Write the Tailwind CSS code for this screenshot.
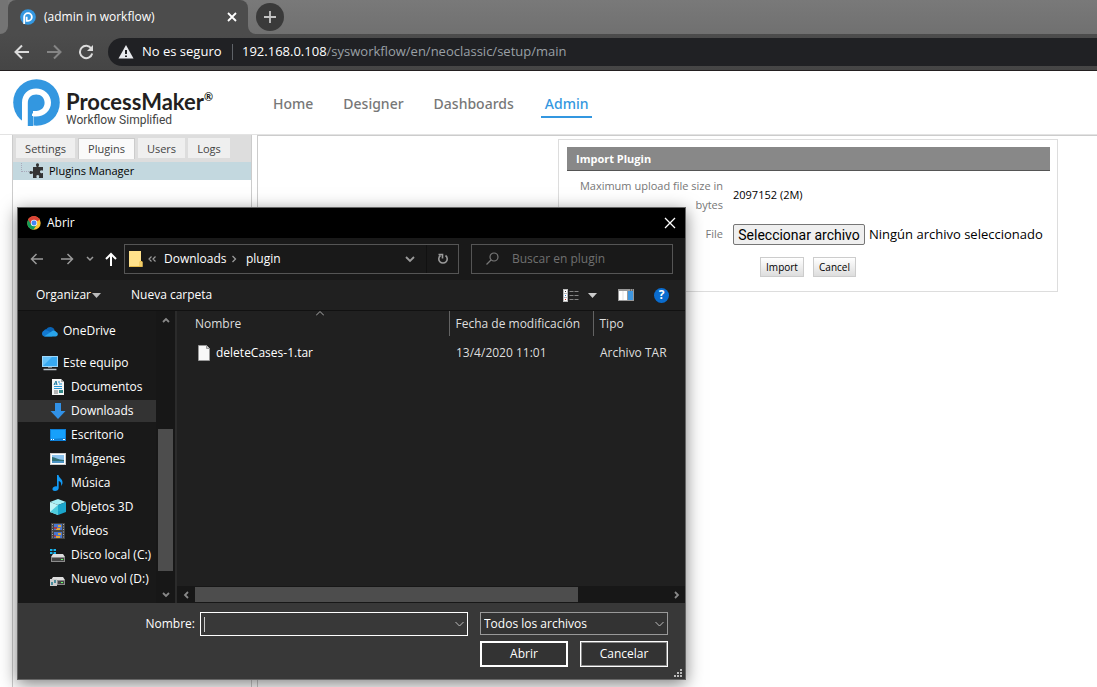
<!DOCTYPE html>
<html lang="es">
<head>
<meta charset="utf-8">
<title>(admin in workflow)</title>
<script src="https://cdn.jsdelivr.net/npm/@tailwindcss/browser@4"></script>
</head>
<body class="relative flex h-screen flex-col overflow-hidden bg-white font-['Open_Sans',sans-serif] text-xs text-black">

<!-- Browser frame -->
<div class="flex flex-col border-b border-[#231f20] bg-[#4c4c4c] text-[13px] text-white">
  <div class="flex h-[34px] bg-linear-to-b from-[#797979] to-[#707070]">
    <div class="w-2 bg-[#4c4c4c]"><div class="h-full rounded-br-lg bg-[#747474]"></div></div>
    <div class="flex w-60 items-center rounded-t-lg bg-[#4c4c4c] pl-3 pr-2">
      <svg class="size-4" viewBox="0 0 48 48"><circle cx="24" cy="24" r="23.500" fill="#3397e0"/><path d="M12.500 45V24a11.500 11.500 0 1 1 11.500 11.500h-4v-12" fill="none" stroke="#fff" stroke-width="5.500"/></svg>
      <span class="ml-2 flex-1 text-xs">(admin in workflow)</span>
      <button aria-label="Cerrar pestaña"><svg class="size-4" viewBox="0 0 16 16" fill="none" stroke="#fff" stroke-width="1.800"><path d="M4 4l8 8M12 4l-8 8"/></svg></button>
    </div>
    <div class="flex flex-1 bg-[#4c4c4c]"><div class="flex-1 rounded-bl-lg bg-linear-to-b from-[#797979] to-[#707070] px-2 pt-[3px]">
      <button class="flex size-7 items-center justify-center rounded-full bg-[#3a3a3a]" aria-label="Nueva pestaña"><svg class="size-4" viewBox="0 0 16 16" stroke="#c4c4c4" stroke-width="1.800"><path d="M8 2v12M2 8h12"/></svg></button>
    </div></div>
  </div>
  <div class="flex h-9 items-center bg-linear-to-b from-[#4c4c4c] to-[#454545]">
    <button class="ml-[14px]" aria-label="Atrás"><svg class="size-4" viewBox="0 0 16 16" fill="none" stroke="#dcdcdc" stroke-width="2"><path d="M15 8H2M8 1.500L1.500 8 8 14.500"/></svg></button>
    <button class="ml-4" aria-label="Adelante"><svg class="size-4" viewBox="0 0 16 16" fill="none" stroke="#858585" stroke-width="2"><path d="M1 8h13M8 1.500L14.500 8 8 14.500"/></svg></button>
    <button class="ml-4" aria-label="Recargar"><svg class="size-4" viewBox="0 0 16 16" fill="none" stroke="#dcdcdc" stroke-width="2"><path d="M13.300 4.500A6.200 6.200 0 1 0 14.200 9.500"/><path d="M15 1v6H9z" fill="#dcdcdc" stroke="none"/></svg></button>
    <div class="ml-[14px] flex h-7 flex-1 items-center rounded-l-full bg-[#202124] pl-[10px]">
      <svg class="size-4" viewBox="0 0 16 16"><path d="M8 1l7.500 13.500H.5z" fill="#e8eaed"/><path d="M8 6v4M8 11.500v1.500" stroke="#202124" stroke-width="2"/></svg>
      <span class="ml-2 w-[82px] whitespace-nowrap">No es seguro</span>
      <span class="ml-2 h-4 w-px bg-[#5f6368]"></span>
      <span class="ml-[9px] whitespace-nowrap text-[#9aa0a6]"><span class="text-white">192.168.0.108</span>/sysworkflow/en/neoclassic/setup/main</span>
    </div>
  </div>
</div>

<!-- ProcessMaker header -->
<header class="flex h-16 shrink-0 border-b border-[#e3e3e3]">
  <div class="flex w-[273px] pl-[13px] pt-2">
    <svg class="size-[47px]" viewBox="0 0 47 47"><circle cx="23.500" cy="23.500" r="23.300" fill="#3397e0"/><path d="M9 39V24C9 15 15 9.500 23 9.500S38 15.500 38 23.500 31.500 37.500 23 37.500H20.500V46.500H15V47L9 45z" fill="#fff"/><path d="M15 47V24c0-5.500 3.500-9 8.500-9s8.500 3.500 8.500 8.500-3.500 8.500-8 8.500h-4v-8" fill="none"/><path d="M14.800 47V24c0-5.200 3.500-8.600 8.400-8.600s8.400 3.500 8.400 8.300-3.600 8.200-8.300 8.200h-3.200V47z" fill="#3397e0"/><path d="M20 24v10.500h-1V37h6v-5h-5z" fill="#fff"/></svg>
    <div class="ml-[6px] whitespace-nowrap pt-[10px] text-[#231f20]">
      <div class="flex font-['Lato',sans-serif] text-[22px] leading-[26px] font-bold">ProcessMaker<span class="text-[11px] leading-4">®</span></div>
      <div class="font-['Roboto',sans-serif] text-xs leading-[10px] text-[#444]">Workflow Simplified</div>
    </div>
  </div>
  <nav class="flex gap-[30px] pt-[22px] font-['Noto_Sans',sans-serif] text-sm leading-[22px] font-medium text-[#777]">
    <a href="#">Home</a><a href="#">Designer</a><a href="#">Dashboards</a>
    <a href="#" class="-ml-[3px] h-[25px] border-b-2 border-[#3397e0] px-1 text-[#3397e0]">Admin</a>
  </nav>
</header>

<main class="flex flex-1 text-[11px]">
  <aside class="ml-3 w-60 border-x border-[#ccc]">
    <div class="flex h-[27px] items-start gap-[3px] border-b-4 border-[#ddd] bg-[#ddd] pl-[3px] pt-[3px] text-[#444]">
      <a href="#" class="h-5 w-[59px] bg-[#efefef] pt-[3px] text-center leading-4">Settings</a>
      <a href="#" class="h-[21px] w-[57px] border border-b-0 border-[#ccc] bg-[#fafafa] pt-[2px] text-center leading-4">Plugins</a>
      <a href="#" class="h-5 w-[47px] bg-[#efefef] pt-[3px] text-center leading-4">Users</a>
      <a href="#" class="h-5 w-[42px] bg-[#efefef] pt-[3px] text-center leading-4">Logs</a>
    </div>
    <a href="#" class="flex h-[18px] items-center bg-[#c3d8df] pl-2">
      <span class="mb-2 h-[9px] w-2 border-b border-l border-dotted border-[#aab]"></span>
      <svg class="size-4" viewBox="0 0 16 16" fill="#333"><path d="M4 4h3.500c.4-.8-.8-1.500-.5-2.600a1.600 1.600 0 0 1 3 0c.3 1.100-.9 1.800-.5 2.600H14v3.500c-.9.300-1.600-.7-2.300 0a1.500 1.500 0 0 0 0 2.600c.7.500 1.400-.4 2.300 0V15h-4c-.5-.9.700-1.400 0-2.400a1.500 1.500 0 0 0-2.500 0c-.6 1 .6 1.500 0 2.400H4v-4.500c-.9-.4-1.500.7-2.500.5a1.600 1.600 0 0 1 0-3c1-.3 1.600.8 2.500.4z"/></svg>
      <span class="ml-1">Plugins Manager</span>
    </a>
  </aside>
  <section class="ml-[5px] flex-1 overflow-hidden border-l border-t border-[#ccc]">
    <form class="ml-[300px] mt-[3px] w-[500px] border border-[#ddd] pl-2 pr-[7px] pt-[7px] pb-[14px]">
      <h1 class="h-6 border-b border-[#555] bg-[#888] pl-[9px] text-[11px] leading-6 font-bold text-white">Import Plugin</h1>
      <div class="flex items-center pt-[5px]">
        <span class="w-[156px] text-right leading-[19px] text-[#777]">Maximum upload file size in bytes</span>
        <span class="ml-[10px]">2097152 (2M)</span>
      </div>
      <div class="mt-[9px] flex h-[23px] items-center whitespace-nowrap">
        <label for="file" class="w-[156px] text-right text-[#777]">File</label>
        <input id="file" type="file" class="sr-only">
        <label for="file" class="ml-[10px] flex h-[21px] w-[132px] items-center justify-center rounded-xs border border-[#767676] bg-[#efefef] font-['Roboto',sans-serif] text-sm">Seleccionar archivo</label>
        <span class="ml-1 text-[13px]">Ningún archivo seleccionado</span>
      </div>
      <div class="mt-[11px] ml-[193px] flex gap-[9px]">
        <button type="button" class="h-5 w-11 border border-[#ccc] bg-linear-to-b from-white to-[#ddd] pt-px text-[10px]">Import</button>
        <button type="button" class="h-5 w-[43px] border border-[#ccc] bg-linear-to-b from-white to-[#ddd] pt-px text-[10px]">Cancel</button>
      </div>
    </form>
  </section>
</main>

<!-- File picker window -->
<div role="dialog" aria-label="Abrir" class="absolute left-[17px] top-[207px] w-[669px] border border-[#666] bg-[#202020] text-xs text-white shadow-[0_4px_16px_rgba(0,0,0,0.5)]">
  <div class="flex h-[30px] items-center bg-black pl-[9px] pr-2">
    <svg class="size-[14px]" viewBox="0 0 48 48"><circle cx="24" cy="24" r="23" fill="#fbc02d"/><path d="M24 24L4 12.500A23 23 0 0 1 44 13z" fill="#db4437"/><path d="M24 24L4 12.500A23 23 0 0 0 22 47L34 29z" fill="#0f9d58"/><path d="M24 13h20A23 23 0 0 0 4 12.500L14.500 29z" fill="#db4437"/><circle cx="24" cy="24" r="11" fill="#f1f1f1"/><circle cx="24" cy="24" r="8.500" fill="#4285f4"/></svg>
    <span class="ml-[6px] flex-1">Abrir</span>
    <button aria-label="Cerrar"><svg class="size-[14px]" viewBox="0 0 14 14" stroke="#fff" stroke-width="1.300"><path d="M2 2l10 10M12 2L2 12"/></svg></button>
  </div>
  <div class="flex h-[42px] items-center bg-[#191919] px-3 pb-px">
    <button aria-label="Atrás"><svg class="size-[14px]" viewBox="0 0 14 14" fill="none" stroke="#9a9a9a" stroke-width="1.500"><path d="M13 7H1.500M6.500 2l-5 5 5 5"/></svg></button>
    <button class="ml-4" aria-label="Adelante"><svg class="size-[14px]" viewBox="0 0 14 14" fill="none" stroke="#9a9a9a" stroke-width="1.500"><path d="M1 7h11.500M7.500 2l5 5-5 5"/></svg></button>
    <button class="ml-3" aria-label="Recientes"><svg class="size-2" viewBox="0 0 8 8" fill="none" stroke="#9a9a9a" stroke-width="1.500"><path d="M1 2l3 3 3-3"/></svg></button>
    <button class="ml-[10px]" aria-label="Subir"><svg class="size-[14px]" viewBox="0 0 14 14" fill="none" stroke="#fff" stroke-width="2"><path d="M7 14V2M2 7l5-5 5 5"/></svg></button>
    <div class="ml-[6px] flex h-[30px] flex-1 items-center border border-[#555] pl-1">
      <svg class="h-4 w-[14px]" viewBox="0 0 14 16"><path d="M0 0h12v10l1.500 1v5H0z" fill="#ffe18b"/><path d="M.5 15.500h12.500v-5h-2v5" fill="none" stroke="#e6bb4a"/></svg>
      <svg class="ml-1 size-[10px]" viewBox="0 0 10 10" fill="none" stroke="#9a9a9a" stroke-width="1.200"><path d="M4.500 2.500L2 5l2.500 2.500M8.500 2.500L6 5l2.500 2.500"/></svg>
      <span class="ml-[7px] w-[62px]">Downloads</span>
      <svg class="ml-1 size-2" viewBox="0 0 8 8" fill="none" stroke="#9a9a9a" stroke-width="1.300"><path d="M2.500 1l3 3-3 3"/></svg>
      <span class="ml-2 flex-1">plugin</span>
      <button aria-label="Ubicaciones anteriores"><svg class="size-[10px]" viewBox="0 0 10 10" fill="none" stroke="#9a9a9a" stroke-width="1.800"><path d="M1 3l4 4 4-4"/></svg></button>
      <button class="ml-[11px] flex h-7 w-8 items-center justify-center border-l border-[#111]" aria-label="Actualizar"><svg class="size-3" viewBox="0 0 12 12" fill="none" stroke="#9a9a9a" stroke-width="1.600"><path d="M8.500 2.500a4.200 4.200 0 1 1-5 0M1.500 1.500h4v4"/></svg></button>
    </div>
    <div class="ml-3 flex h-[30px] w-[202px] items-center border border-[#555] pl-[14px]">
      <svg class="size-[13px]" viewBox="0 0 13 13" fill="none" stroke="#777" stroke-width="1.200"><circle cx="8" cy="5" r="4"/><path d="M5 8L.5 12.500"/></svg>
      <input aria-label="Buscar en plugin" placeholder="Buscar en plugin" class="ml-[13px] w-36 bg-transparent placeholder:text-[#707070]">
    </div>
  </div>
  <div class="flex h-[31px] items-center border-b border-[#111] pl-[18px] pr-4">
    <button class="flex w-[65px] items-center justify-between">Organizar <svg class="h-[5px] w-[9px] shrink-0" viewBox="0 0 9 5" fill="#bbb"><path d="M0 0h9L4.500 5z"/></svg></button>
    <button class="ml-[30px]">Nueva carpeta</button>
    <button class="ml-auto" aria-label="Cambiar vista"><svg class="h-[13px] w-4" viewBox="0 0 16 13"><path d="M0 0h5v13H0z" fill="#bbb"/><path d="M1 1h3v3H1zM1 5h3v3H1zM1 9h3v3H1z" fill="#fff"/><path d="M2 2h1v1H2z" fill="#333"/><path d="M2 6h1v1H2z" fill="#27c"/><path d="M2 10h1v1H2z" fill="#c22"/><path d="M6.500 2.500h4m1 0h4M6.500 6.500h4m1 0h4M6.500 10.500h4m1 0h4" stroke="#858585"/></svg></button>
    <button class="ml-[9px]" aria-label="Más opciones"><svg class="h-[5px] w-[9px]" viewBox="0 0 9 5" fill="#ccc"><path d="M0 0h9L4.500 5z"/></svg></button>
    <button class="ml-[21px]" aria-label="Panel de vista previa"><svg class="h-3 w-4" viewBox="0 0 16 12"><path d="M0 0h16v12H0z" fill="#999"/><path d="M1 2h8v9H1z" fill="#fff"/><path d="M5 2v9" stroke="#ccc" stroke-width=".6"/><path d="M10 2h5v9h-5z" fill="#3f97e0"/><path d="M12 1h1m1 0h1" stroke="#333"/></svg></button>
    <button class="ml-5 flex size-[15px] items-center justify-center rounded-full bg-[#0a6cce] text-xs font-bold" aria-label="Ayuda">?</button>
  </div>

  <div class="flex h-[292px]">
    <ul class="w-[138px] bg-[#191919] pt-2 leading-[22px]">
      <li class="flex h-6 items-center pl-6"><svg class="h-[11px] w-4" viewBox="0 0 16 11"><path d="M1.500 7C1.500 4.500 3 3 4.500 3 6 .5 11 0 12.500 4l-2 3z" fill="#0a64b5"/><path d="M0 7.500C0 5 2.500 3.500 5 4.500l7 3-2 3H3C1.200 10.500 0 9.300 0 7.500z" fill="#1379d0"/><path d="M2 10.500l7.500-5c1.500-1.500 4-1 4.500.5 2.500.500 2.500 4.500-.5 4.500z" fill="#29a4ea"/></svg><span class="ml-[5px]">OneDrive</span></li>
      <li class="mt-2 flex h-6 items-center pl-6"><svg class="h-[15px] w-4" viewBox="0 0 16 15"><path d="M0 0h16v11H0z" fill="#9ed7fa"/><path d="M1 1h14v9H1z" fill="#37a9f2"/><path d="M1 10V1h9z" fill="#66c2f9"/><path d="M6 11h4v1H6z" fill="#777"/><path d="M1.500 13.500h13" stroke="#bdc5cc" stroke-width="1.500"/></svg><span class="ml-[5px]">Este equipo</span></li>
      <li class="flex h-6 items-center pl-8"><svg class="size-4" viewBox="0 0 16 16"><path d="M2 0h9l3 3v13H2z" fill="#f5f5f5"/><path d="M11 0v3h3" fill="#aaa"/><path d="M4 5h3m2 0h3M4 7.500h8M4 9.500h8M8 3h2" stroke="#2595d5"/><path d="M4 12h4M4 14h4" stroke="#777"/><path d="M9 11h4v3H9z" fill="#388"/><path d="M4 6l2-4 1 4" fill="none" stroke="#279"/></svg><span class="ml-[5px]">Documentos</span></li>
      <li class="my-px flex h-[22px] items-center bg-[#333] pl-8"><svg class="size-4" viewBox="0 0 16 16"><path d="M5 0h6v8h4.500L8 16 .5 8H5z" fill="#3191e6"/></svg><span class="ml-[5px]">Downloads</span></li>
      <li class="flex h-6 items-center pl-8"><svg class="h-3 w-4" viewBox="0 0 16 12"><path d="M0 0h16v12H0z" fill="#0e7fd6"/><path d="M1 1h14v8L1 10z" fill="#16a0fb"/><path d="M1 10.500h1m1 0h1m9 0h2" stroke="#fff"/></svg><span class="ml-[5px]">Escritorio</span></li>
      <li class="flex h-6 items-center pl-8"><svg class="h-3 w-4" viewBox="0 0 16 12"><path d="M0 0h16v12H0z" fill="#ccc"/><path d="M1 1h14v10H1z" fill="#fff"/><path d="M2 2h12v8H2z" fill="#8dc4ee"/><path d="M2 4c3 0 6 3 12 3v1H2z" fill="#2f6f74"/><path d="M2 8h12v2H2z" fill="#4b93c4"/></svg><span class="ml-[5px]">Imágenes</span></li>
      <li class="flex h-6 items-center pl-8"><svg class="size-4" viewBox="0 0 16 16"><path d="M7 0h1.500c.3 3 4.500 4 4 8-.2 1.300-.7 2-1.500 3 .6-3-.5-4.500-2.300-5v7c0 1.700-1.700 3-3.700 3-1.700 0-2.700-1-2.500-2.300C2.700 12 5 11 7 11.500z" fill="#129af5"/></svg><span class="ml-[5px]">Música</span></li>
      <li class="flex h-6 items-center pl-8"><svg class="size-4" viewBox="0 0 16 16"><path d="M0 3l8-3 8 3-8 3z" fill="#a5eef5"/><path d="M0 3l8 3v10l-8-3z" fill="#bff3f6"/><path d="M16 3L8 6v10l8-3z" fill="#1ba5cb"/><path d="M0 13l8-7v10z" fill="#4dcbdc"/></svg><span class="ml-[5px]">Objetos 3D</span></li>
      <li class="flex h-6 items-center pl-8"><svg class="size-4" viewBox="0 0 16 16"><path d="M1 0h14v16H1z" fill="#444"/><path d="M4 1h8v6H4zM4 9h8v6H4z" fill="#4a77cf"/><path d="M8 2h3v2H8zM6 5h4v2H6zM8 10h3v2H8zM6 13h4v2H6z" fill="#e0a336"/><path d="M4 4h3v2H4zM4 12h2v2H4z" fill="#a33a55"/><path d="M2.500 1v15M13.500 1v15" stroke="#aaa" stroke-dasharray="1 1.500"/></svg><span class="ml-[5px]">Vídeos</span></li>
      <li class="flex h-6 items-center pl-8"><svg class="size-4" viewBox="0 0 16 16"><path d="M0 2h2.500v2H0zM3.500 2H6v2H3.500zM0 5h2.500v2H0zM3.500 5H6v2H3.500z" fill="#18b3ed"/><path d="M3 7h10l2 3H1z" fill="#ddd"/><path d="M1 10h14v5H1z" fill="#8b8b8b"/><path d="M2 11h12v3H2z" fill="#444"/><path d="M11 12h2v1h-2z" fill="#6f6"/></svg><span class="ml-[5px] whitespace-nowrap">Disco local (C:)</span></li>
      <li class="flex h-6 items-center pl-8"><svg class="size-4" viewBox="0 0 16 16"><path d="M3 6h10l2 3H1z" fill="#ddd"/><path d="M1 9h14v5H1z" fill="#8b8b8b"/><path d="M8 10h6v3H8z" fill="#444"/><path d="M11 11h2v1h-2z" fill="#6f6"/><path d="M0 8h7v7H0z" fill="#ccc"/><path d="M1 11h2v3H1zM4 9h2v3H4z" fill="#4a8b9a"/></svg><span class="ml-[5px] whitespace-nowrap">Nuevo vol (D:)</span></li>
    </ul>
    <div class="flex w-[21px] flex-col items-center border-r-2 border-[#2b2b2b] bg-[#171717] px-[2px]">
      <svg class="mt-[6px] h-[7px] w-2" viewBox="0 0 8 7" fill="none" stroke="#888" stroke-width="1.800"><path d="M1 5l3-3 3 3"/></svg>
      <div class="mt-[105px] h-[142px] w-[15px] bg-[#4d4d4d]"></div>
      <svg class="mt-5 h-[7px] w-2" viewBox="0 0 8 7" fill="none" stroke="#888" stroke-width="1.800"><path d="M1 2l3 3 3-3"/></svg>
    </div>
    <div class="relative flex flex-1 flex-col">
      <svg class="absolute left-[139px] top-0 h-[5px] w-2" viewBox="0 0 8 5" fill="none" stroke="#aaa"><path d="M0 4.500l4-4 4 4"/></svg>
      <table class="w-full table-fixed text-left">
        <thead><tr class="h-[25px] text-[#dedede]"><th class="w-[272px] pl-[18px] font-normal">Nombre</th><th class="w-36 border-l border-[#636363] pl-[6px] font-normal">Fecha de modificación</th><th class="border-l border-[#636363] pl-[6px] font-normal">Tipo</th></tr></thead>
        <tbody><tr class="h-[34px]"><td class="pl-[21px]"><span class="flex items-center"><svg class="h-4 w-3" viewBox="0 0 12 16"><path d="M.5.5h8l3 3v12H.5z" fill="#f8f8f8" stroke="#999"/><path d="M8.500.5v3h3" fill="#ccc" stroke="#999"/></svg><span class="ml-[6px]">deleteCases-1.tar</span></span></td><td class="pl-[7px] text-[#dedede]">13/4/2020 11:01</td><td class="whitespace-nowrap pl-[7px] text-[#dedede]">Archivo TAR</td></tr></tbody>
      </table>
      <div class="mt-auto flex h-[17px] items-center bg-[#171717] pl-[6px] pr-[5px]">
        <svg class="h-2 w-[7px]" viewBox="0 0 7 8" fill="none" stroke="#888" stroke-width="1.800"><path d="M5 1L2 4l3 3"/></svg>
        <div class="ml-[5px] h-[15px] w-[383px] bg-[#4d4d4d]"></div>
        <svg class="ml-auto h-2 w-[7px]" viewBox="0 0 7 8" fill="none" stroke="#888" stroke-width="1.800"><path d="M2 1l3 3-3 3"/></svg>
      </div>
    </div>
  </div>

  <div class="relative flex h-[76px] flex-col bg-[#383838] pr-[17px] pt-[9px]">
    <div class="flex items-start">
      <label for="name" class="w-[182px] pr-[5px] text-right leading-6">Nombre:</label>
      <div class="relative flex-1">
        <input id="name" class="block h-6 w-full border border-white bg-[#383838] px-1">
        <span class="absolute left-1 top-[5px] h-[15px] w-px bg-[#ccc]"></span>
        <svg class="absolute right-1 top-[9px] h-[6px] w-[9px]" viewBox="0 0 9 6" fill="none" stroke="#bbb"><path d="M.5 1l4 4 4-4"/></svg>
      </div>
      <div class="relative ml-3 w-[188px]">
        <select aria-label="Tipo de archivo" class="block h-[23px] w-full appearance-none border border-[#999] bg-[#333] pl-[3px]"><option>Todos los archivos</option></select>
        <svg class="pointer-events-none absolute right-1 top-[9px] h-[6px] w-[9px]" viewBox="0 0 9 6" fill="none" stroke="#bbb"><path d="M.5 1l4 4 4-4"/></svg>
      </div>
    </div>
    <div class="mt-[5px] flex justify-end gap-3">
      <button class="h-[26px] w-[88px] border-2 border-white bg-[#333]">Abrir</button>
      <button class="h-[26px] w-[88px] border border-white bg-[#333] inset-ring inset-ring-[#888]">Cancelar</button>
    </div>
    <svg class="absolute bottom-[2px] right-[3px] size-2" viewBox="0 0 8 8" fill="#bbb"><path d="M6 0h2v2H6zM3 3h2v2H3zM6 3h2v2H6zM0 6h2v2H0zM3 6h2v2H3zM6 6h2v2H6z"/></svg>
  </div>
</div>
</body>
</html>
